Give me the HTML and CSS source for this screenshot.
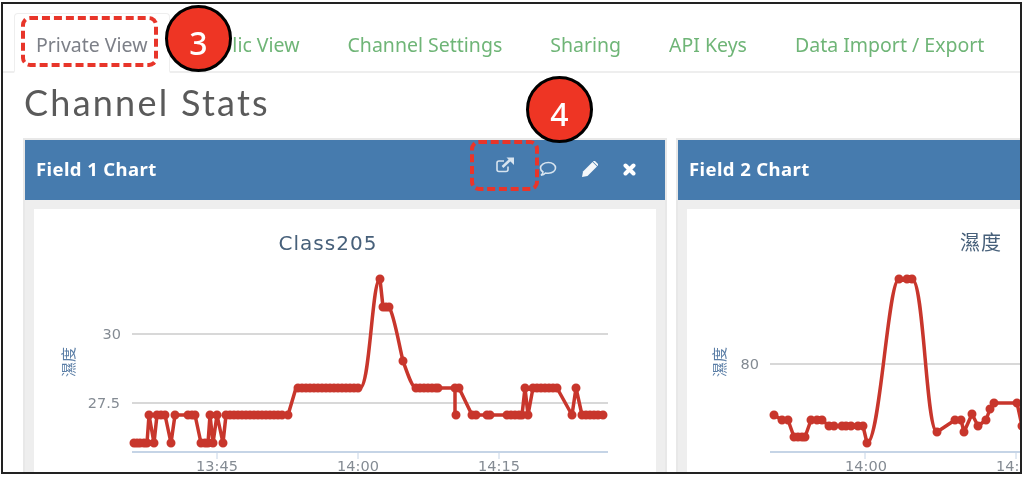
FILE: index.html
```html
<!DOCTYPE html>
<html lang="en">
<head>
<meta charset="utf-8">
<title>Channel Stats</title>
<link rel="stylesheet" href="styles.css">
</head>
<body>
<div class="frame">
  <nav class="tabs">
    <a class="tab tab-active">Private View</a>
    <a class="tab">Public View</a>
    <a class="tab">Channel Settings</a>
    <a class="tab">Sharing</a>
    <a class="tab">API Keys</a>
    <a class="tab">Data Import / Export</a>
  </nav>
  <h1 class="page-title">Channel Stats</h1>
  <div class="cards">
    <section class="card">
      <header class="card-head">
        <span class="card-title">Field 1 Chart</span>
        <div class="card-icons">
          <svg class="icon icon-ext" width="18" height="16" viewBox="0 0 18 16"><path class="ic-line" d="M12 9.500v3a2 2 0 0 1-2 2H3a2 2 0 0 1-2-2V6a2 2 0 0 1 2-2h5"/><path class="ic-line ic-arrow" d="M6.500 10 14 3"/><path class="ic-fill" d="M10.500 .5H18V8L15.500 5.500 13 3z"/></svg>
          <svg class="icon" width="18" height="16" viewBox="0 0 18 16"><path class="ic-line" d="M9.500 1.500C5 1.500 1.500 3.800 1.500 7c0 1.700 1 3 2.500 4-.2 1.300-1 2.500-2 3.200 1.800-.2 3.400-1 4.500-2.200 1 .2 2 .3 3 .2 4 0 7-2.300 7-5.200s-3-5.500-7-5.500z"/></svg>
          <svg class="icon" width="16" height="16" viewBox="0 0 16 16"><path class="ic-solid" d="M0 16l1-5.500L10.500 1l4.500 4.500L5.500 15z"/><path class="ic-solid" d="M11.500 0h1.500l3 3v1.500L15.500 5 11 .5z"/></svg>
          <svg class="icon" width="13" height="13" viewBox="0 0 13 13"><path class="ic-x" d="M2.500 2.500l8 8M10.500 2.500l-8 8"/></svg>
        </div>
      </header>
      <div class="panel">
        <svg class="chart" width="622" height="263" viewBox="34 209 622 263">
          <text class="ch-title" x="328" y="250" text-anchor="middle">Class205</text>
          <path class="grid" d="M132 334H608M132 403H608"/>
          <path class="axis" d="M132 452H608"/>
          <path class="tick" d="M217 452v7M358 452v7M499 452v7"/>
          <text class="y-label" x="0" y="0" text-anchor="middle" transform="translate(74 362) rotate(-90)">濕度</text>
          <text class="num" x="121" y="339" text-anchor="end">30</text>
          <text class="num" x="120" y="408" text-anchor="end">27.5</text>
          <text class="num" x="217" y="471" text-anchor="middle">13:45</text>
          <text class="num" x="358" y="471" text-anchor="middle">14:00</text>
          <text class="num" x="499" y="471" text-anchor="middle">14:15</text>
          <path class="line" d="M134 443H147L149 415 154 443 157 415H165L171 443 175 415H195L201 443H208L210 415 213 443 217 415 223 443 226 415H288L296 388H360C370 388 372 279 380 279L383 307H389C394 314 399 345 403 361 407 372 412 388 416 388H455V415 388H459L472 415H522L525 388 528 415 533 388H557L572 415 576 388 582 415H604"/>
          <path class="dots" d="M134 443h0M137 443h0M140 443h0M144 443h0M147 443h0M149 415h0M154 443h0M157 415h0M161 415h0M165 415h0M171 443h0M175 415h0M188 415h0M192 415h0M195 415h0M201 443h0M205 443h0M208 443h0M210 415h0M213 443h0M217 415h0M223 443h0M226 415h0M230 415h0M234 415h0M238 415h0M242 415h0M246 415h0M250 415h0M254 415h0M258 415h0M262 415h0M266 415h0M270 415h0M274 415h0M278 415h0M282 415h0M288 415h0M298 388h0M302 388h0M306 388h0M310 388h0M314 388h0M318 388h0M322 388h0M326 388h0M330 388h0M334 388h0M338 388h0M342 388h0M346 388h0M350 388h0M354 388h0M358 388h0M380 279h0M383 307h0M386 307h0M389 307h0M403 361h0M416 388h0M420 388h0M424 388h0M428 388h0M432 388h0M436 388h0M438 388h0M455 388h0M456 415h0M459 388h0M472 415h0M476 415h0M487 415h0M490 415h0M507 415h0M511 415h0M515 415h0M519 415h0M522 415h0M525 388h0M528 415h0M533 388h0M537 388h0M541 388h0M545 388h0M549 388h0M553 388h0M557 388h0M572 415h0M576 388h0M582 415h0M586 415h0M590 415h0M594 415h0M598 415h0M603 415h0"/>
        </svg>
      </div>
    </section>
    <section class="card">
      <header class="card-head">
        <span class="card-title">Field 2 Chart</span>
      </header>
      <div class="panel">
        <svg class="chart" width="622" height="263" viewBox="687 209 622 263">
          <text class="ch-title ch-cjk" x="981" y="250" text-anchor="middle">濕度</text>
          <path class="grid" d="M770 364H1100"/>
          <path class="axis" d="M770 452H1100"/>
          <path class="tick" d="M865 452v7M1016 452v7"/>
          <text class="y-label" x="0" y="0" text-anchor="middle" transform="translate(725 362) rotate(-90)">濕度</text>
          <text class="num" x="759" y="369" text-anchor="end">80</text>
          <text class="num" x="866" y="471" text-anchor="middle">14:00</text>
          <text class="num" x="1017" y="471" text-anchor="middle">14:15</text>
          <path class="line" d="M774 415 782 420H788L794 437H805L811 420H822L829 426H863L867 443C880 443 888 279 899 279H912C924 279 926 432 937 432L955 420H961L964 432 972 414 978 426 986 420 990 409 994 403H1017L1022 426"/>
          <path class="dots" d="M774 415h0M782 420h0M788 420h0M794 437h0M798 437h0M802 437h0M805 437h0M811 420h0M817 420h0M822 420h0M829 426h0M834 426h0M842 426h0M846 426h0M851 426h0M858 426h0M863 426h0M867 443h0M899 279h0M907 279h0M912 279h0M937 432h0M955 420h0M961 420h0M964 432h0M972 414h0M978 426h0M986 420h0M990 409h0M994 403h0M1017 403h0M1022 426h0"/>
        </svg>
      </div>
    </section>
  </div>
  <div class="dash dash-tab"></div>
  <div class="dash dash-icon"></div>
  <div class="badge badge-3">3</div>
  <div class="badge badge-4">4</div>
</div>
</body>
</html>
```
FILE: styles.css
```css
html, body {
  margin: 0;
  padding: 0;
  background: #fff;
}
.frame {
  position: relative;
  box-sizing: border-box;
  width: 1021px;
  height: 472px;
  margin: 2px 0 0 1px;
  border: 2px solid #222;
  overflow: hidden;
  background: #fff;
  font-family: "Noto Sans", "Open Sans", sans-serif;
  filter: blur(.4px);
}
.tabs {
  display: flex;
  box-sizing: border-box;
  height: 60px;
  margin-top: 9px;
  padding-left: 11px;
  border-bottom: 2px solid #eee;
  font-size: 19.500px;
}
.tab {
  display: flex;
  align-items: center;
  padding: 4px 24px 0;
  color: #6fb577;
  white-space: nowrap;
}
.tab-active {
  padding: 4px 21px 0;
  margin: 0 3px -2px 0;
  border: 1px solid #eee;
  border-bottom: 2px solid #fff;
  border-radius: 4px 4px 0 0;
  background: #fff;
  color: #7d8088;
}
.page-title {
  margin: 5px 0 0 21px;
  height: 60px;
  font-family: "Lato", sans-serif;
  font-size: 36px;
  line-height: 48px;
  font-weight: 400;
  letter-spacing: 2.250px;
  color: #5a5a5a;
}
.cards {
  display: flex;
  gap: 9px;
  padding-left: 20px;
}
.card {
  flex: 0 0 644px;
  box-sizing: border-box;
  border: 2px solid #e8e8e8;
  border-bottom: 0;
  background: #eee;
}
.card-head {
  display: flex;
  align-items: center;
  justify-content: space-between;
  box-sizing: border-box;
  height: 60px;
  padding: 0 29px 4px 11px;
  background: #467bae;
  color: #fff;
}
.card-title {
  font-size: 18.500px;
  font-weight: 700;
  letter-spacing: .4px;
}
.card-icons {
  display: flex;
  align-items: center;
  gap: 25px;
  padding-top: 2px;
}
.icon {
  display: block;
}
.icon-ext {
  margin-bottom: 8px;
}
.ic-line {
  fill: none;
  stroke: #d7e4ef;
  stroke-width: 1.600;
}
.ic-arrow {
  stroke-width: 2.500;
}
.ic-fill {
  fill: #d7e4ef;
}
.ic-solid {
  fill: #f4f7fa;
}
.ic-x {
  fill: none;
  stroke: #fff;
  stroke-width: 4;
  stroke-linecap: round;
}
.panel {
  margin: 9px 9px 0;
  background: #fff;
}
.chart {
  display: block;
}
.ch-title {
  font-family: "DejaVu Sans", sans-serif;
  font-size: 20px;
  letter-spacing: 1px;
  fill: #47607a;
}
.ch-cjk,
.y-label {
  font-family: "Noto Sans CJK TC", sans-serif;
}
.ch-cjk {
  font-size: 20px;
}
.y-label {
  font-size: 15px;
  fill: #5b7ea6;
}
.num {
  font-family: "DejaVu Sans", sans-serif;
  font-size: 14.500px;
  fill: #848b93;
}
.grid {
  fill: none;
  stroke: #d8d8d8;
  stroke-width: 2;
}
.axis {
  fill: none;
  stroke: #c5d4e6;
  stroke-width: 2;
}
.tick {
  fill: none;
  stroke: #c5d4e6;
  stroke-width: 1;
}
.line {
  fill: none;
  stroke: #c8362c;
  stroke-width: 3.500;
  stroke-linejoin: round;
}
.dots {
  fill: none;
  stroke: #c8362c;
  stroke-width: 9;
  stroke-linecap: round;
}
.dash {
  position: absolute;
  box-sizing: border-box;
  border: 4px dashed #e8352a;
  border-radius: 9px;
}
.dash-tab {
  left: 18px;
  top: 12px;
  width: 137px;
  height: 51px;
}
.dash-icon {
  left: 467px;
  top: 136px;
  width: 69px;
  height: 51px;
}
.badge {
  position: absolute;
  box-sizing: border-box;
  display: flex;
  align-items: center;
  justify-content: center;
  width: 67px;
  height: 67px;
  padding-top: 8px;
  border: 3px solid #000;
  border-radius: 50%;
  background: #ee3524;
  color: #fff;
  font-size: 32px;
  font-weight: 500;
}
.badge-3 {
  left: 162px;
  top: 1px;
}
.badge-4 {
  left: 523px;
  top: 72px;
}
```
